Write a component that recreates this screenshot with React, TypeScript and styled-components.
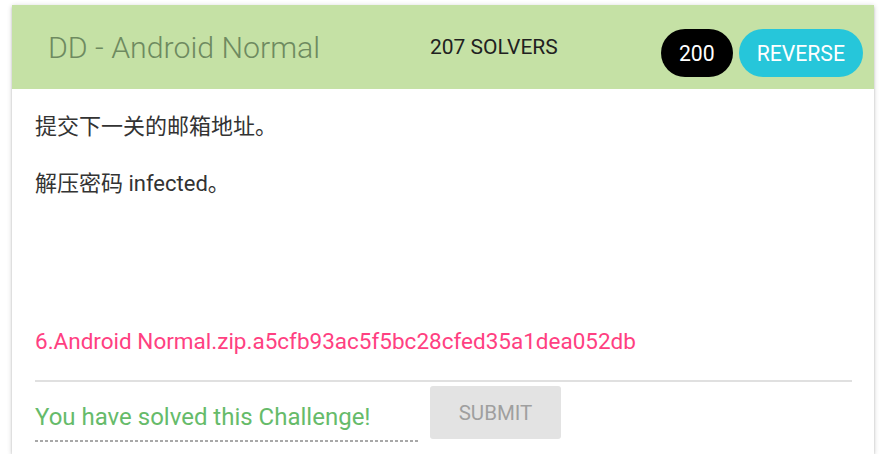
import React from "react";
import styled, { createGlobalStyle } from "styled-components";

const Global = createGlobalStyle`
  html, body { margin: 0; padding: 0; background: #ffffff; }
  body { font-family: Roboto, "Noto Sans CJK SC", sans-serif; }
  * { box-sizing: border-box; }
`;

const Card = styled.div`
  margin: 5px 13px 0 12px;
  width: 862px;
  height: 449px;
  background: #ffffff;
  box-shadow: 0 2px 2px 0 rgba(0,0,0,0.14), 0 3px 1px -2px rgba(0,0,0,0.12), 0 1px 5px 0 rgba(0,0,0,0.2);
  display: flex;
  flex-direction: column;
`;

const Header = styled.div`
  height: 84px;
  background: #c5e1a5;
  display: flex;
  align-items: center;
  padding: 0 11px 0 36px;
`;

const Title = styled.div`
  width: 382px;
  font-family: Roboto, sans-serif;
  font-weight: 300;
  font-size: 30.3px;
  color: #6e8a60;
  white-space: nowrap;
`;

const Solvers = styled.div`
  flex: 1;
  font-family: Roboto, sans-serif;
  font-size: 21px;
  color: #212121;
  margin-top: -1px;
`;

const Badges = styled.div`
  display: flex;
  gap: 6px;
  margin-top: 12px;
`;

const Pill = styled.div<{ $bg: string }>`
  height: 48px;
  border-radius: 24px;
  padding: 0 18px;
  background: ${(p) => p.$bg};
  color: #ffffff;
  font-family: Roboto, sans-serif;
  font-size: 21.2px;
  display: flex;
  align-items: center;
  justify-content: center;
`;

const Body = styled.div`
  flex: 1;
  padding: 21px 22px 0 23px;
  display: flex;
  flex-direction: column;
`;

const Para = styled.p`
  margin: 0 0 24px;
  font-family: Roboto, "Noto Sans CJK SC", sans-serif;
  font-size: 22px;
  line-height: 33px;
  color: #333333;
`;

const Spacer = styled.div`
  flex: 1;
`;

const FileLink = styled.a`
  display: block;
  font-family: Roboto, sans-serif;
  font-size: 22.5px;
  line-height: 32px;
  color: #ff4081;
  text-decoration: none;
  margin-bottom: 23px;
`;

const Divider = styled.div`
  height: 2px;
  background: #e0e0e0;
`;

const Footer = styled.div`
  display: flex;
  align-items: flex-start;
  gap: 12px;
  padding: 4px 0 12px;
`;

const SolvedField = styled.div`
  width: 383px;
  height: 56px;
  display: flex;
  align-items: flex-end;
  padding-bottom: 11px;
  background-image: repeating-linear-gradient(to right, #a8a8a8 0 3px, transparent 3px 5px);
  background-size: 100% 2px;
  background-position: left bottom;
  background-repeat: no-repeat;
  font-family: Roboto, sans-serif;
  font-size: 24px;
  color: #66bb6a;
`;

const SubmitButton = styled.button`
  width: 131px;
  height: 53px;
  border: none;
  border-radius: 3px;
  background: #e3e3e3;
  color: #9f9f9f;
  font-family: Roboto, sans-serif;
  font-size: 20.5px;
  cursor: default;
`;

export default function App() {
  return (
    <>
      <Global />
      <Card>
        <Header>
          <Title>DD - Android Normal</Title>
          <Solvers>207 SOLVERS</Solvers>
          <Badges>
            <Pill $bg="#000000">200</Pill>
            <Pill $bg="#26c6da">REVERSE</Pill>
          </Badges>
        </Header>
        <Body>
          <Para>提交下一关的邮箱地址。</Para>
          <Para>解压密码 infected。</Para>
          <Spacer />
          <FileLink href="#">6.Android Normal.zip.a5cfb93ac5f5bc28cfed35a1dea052db</FileLink>
          <Divider />
          <Footer>
            <SolvedField>You have solved this Challenge!</SolvedField>
            <SubmitButton disabled>SUBMIT</SubmitButton>
          </Footer>
        </Body>
      </Card>
    </>
  );
}
